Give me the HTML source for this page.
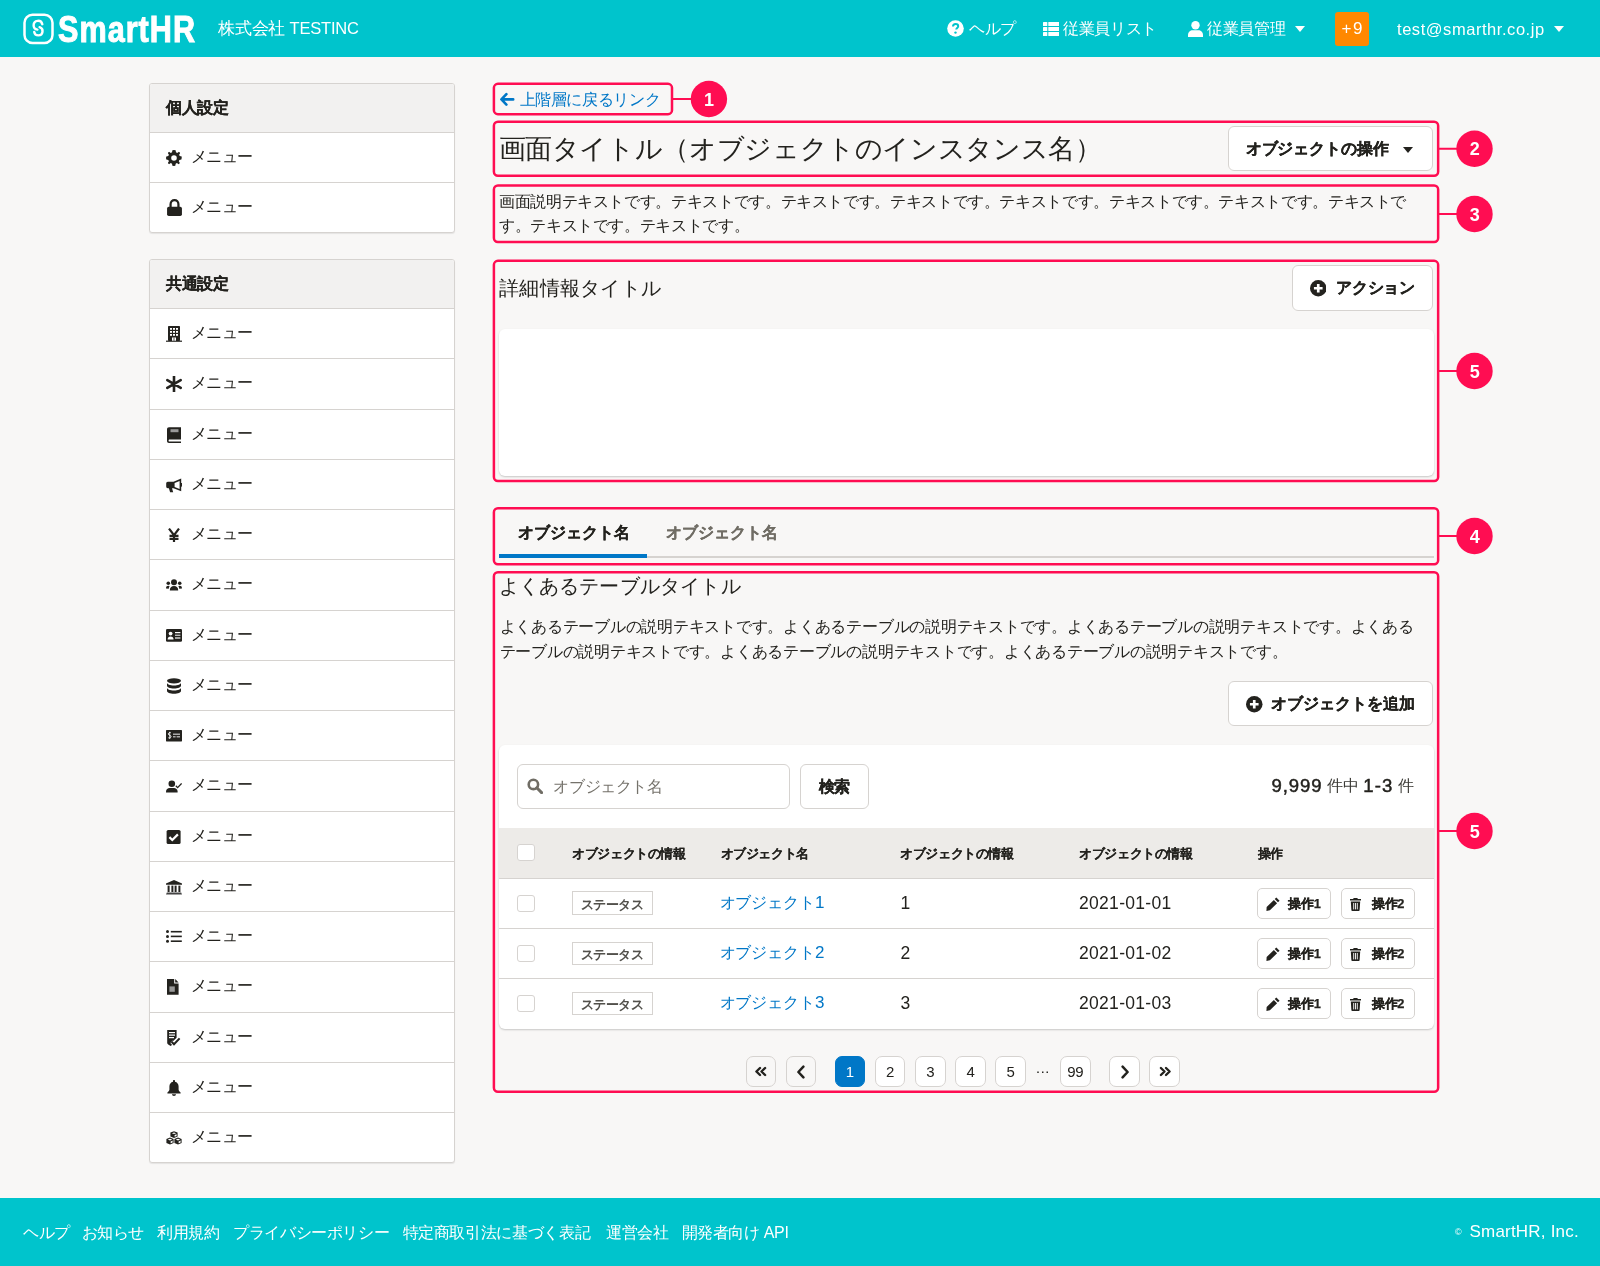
<!DOCTYPE html>
<html lang="ja"><head><meta charset="utf-8"><title>SmartHR</title>
<style>
*{box-sizing:border-box;margin:0;padding:0}
html,body{width:1600px;height:1266px;overflow:hidden}
html{background:#f8f7f6}body{position:relative;font-family:"Liberation Sans",sans-serif;color:#23221e;font-size:16px;letter-spacing:-0.36px;line-height:1}
.a{position:absolute}
.t{position:absolute;white-space:nowrap;line-height:1}
#hdr{left:0;top:0;width:1600px;height:57px;background:#00c4cc}
#ftr{left:0;top:1197.5px;width:1600px;height:69px;background:#00c4cc}
.w{color:#fff}
.side{position:absolute;left:149px;width:306px;background:#fff;border:1px solid #d6d3d0;border-radius:3px;box-shadow:0 1px 1px rgba(0,0,0,.08);overflow:hidden}
.side .hd{height:49px;background:#f2f1f0;border-bottom:1px solid #d6d3d0;position:relative}
.side .hd span{position:absolute;left:16px;top:16.2px;font-weight:bold;font-size:16px;letter-spacing:-0.36px}
.side .row{height:50.25px;border-bottom:1px solid #d6d3d0;position:relative}
.side .row:last-child{border-bottom:none}
.side .row svg{position:absolute;left:16px;top:17px;width:16px;height:16px}
.side .row span{position:absolute;left:40.5px;top:16px;font-size:16px;letter-spacing:-0.36px}
.btn{position:absolute;background:#fff;border:1px solid #d6d3d0;border-radius:6px}
.btn span{position:absolute;white-space:nowrap;font-weight:bold;-webkit-text-stroke:.25px #23221e}
[style*="font-weight:bold"]{-webkit-text-stroke:.2px currentColor}
.side .hd span{-webkit-text-stroke:.2px currentColor}
.panel{position:absolute;background:#fff;border-radius:6px;box-shadow:0 1px 2px rgba(0,0,0,.2)}
</style></head><body><div id="root" style="position:absolute;left:0;top:0;width:1600px;height:1266px;will-change:transform">
<!-- HEADER -->
<div id="hdr" class="a"></div>
<svg class="a" style="left:23px;top:13px" width="32" height="32" viewBox="0 0 32 32">
  <rect x="1.5" y="1.8" width="28" height="28.2" rx="8" fill="none" stroke="#fff" stroke-width="2.5"/>
  <path d="M19.3 11.2A4.4 4.4 0 1 0 14.4 16.6M16.6 14.2A4.2 4.2 0 1 1 11.2 18.9" fill="none" stroke="#fff" stroke-width="2.4" stroke-linecap="round"/>
</svg>
<div class="t w" style="left:58px;top:11.5px;font-size:36px;font-weight:bold;transform:scaleX(.85);transform-origin:0 0;letter-spacing:1.2px;-webkit-text-stroke:1px #fff">SmartHR</div>
<div class="t w" style="left:218px;top:20px;font-size:16.5px;letter-spacing:-0.2px">株式会社 TESTINC</div>

<!-- nav -->
<svg class="a" style="left:947px;top:20px" width="17" height="17" viewBox="0 0 17 17"><circle cx="8.5" cy="8.5" r="8.3" fill="#fff"/><path d="M6 6.6c0-1.6 1.2-2.5 2.6-2.5 1.5 0 2.6.9 2.6 2.2 0 1.7-2 1.8-2 3.3" fill="none" stroke="#00c4cc" stroke-width="2"/><circle cx="8.5" cy="12.6" r="1.2" fill="#00c4cc"/></svg>
<div class="t w" style="left:969px;top:21px;font-size:16px;letter-spacing:-0.36px">ヘルプ</div>
<svg class="a" style="left:1042.5px;top:21.8px" width="16.5" height="14" viewBox="0 0 16.5 14"><g fill="#fff"><rect x="0" y="0" width="4.3" height="4" rx=".6"/><rect x="5.3" y="0" width="11.2" height="4" rx=".6"/><rect x="0" y="5" width="4.3" height="4" rx=".6"/><rect x="5.3" y="5" width="11.2" height="4" rx=".6"/><rect x="0" y="10" width="4.3" height="4" rx=".6"/><rect x="5.3" y="10" width="11.2" height="4" rx=".6"/></g></svg>
<div class="t w" style="left:1063px;top:21px;font-size:16px;letter-spacing:-0.36px">従業員リスト</div>
<svg class="a" style="left:1187.5px;top:20.5px" width="15" height="16.5" viewBox="0 0 15 16.5"><g fill="#fff"><circle cx="7.5" cy="4.2" r="4.2"/><path d="M0 16.5 V14.2 C0 11.2 2.3 9.3 4.6 9.3 H10.4 C12.7 9.3 15 11.2 15 14.2 V16.5Z"/></g></svg>
<div class="t w" style="left:1207px;top:21px;font-size:16px;letter-spacing:-0.36px">従業員管理</div>
<svg class="a" style="left:1295px;top:26px" width="10" height="6" viewBox="0 0 10 6"><path d="M0 0H10L5 6Z" fill="#fff"/></svg>
<div class="a" style="left:1335.4px;top:12px;width:34px;height:33.6px;background:#ff8800;border-radius:3px"></div>
<div class="t w" style="left:1341.5px;top:20px;font-size:17px;letter-spacing:1.5px">+9</div>
<div class="t w" style="left:1397px;top:20.5px;font-size:16.5px;letter-spacing:0.55px">test@smarthr.co.jp</div>
<svg class="a" style="left:1553.5px;top:26px" width="10" height="6" viewBox="0 0 10 6"><path d="M0 0H10L5 6Z" fill="#fff"/></svg>

<!-- SIDEBAR -->
<div class="side" style="top:82.7px;height:150px">
  <div class="hd"><span>個人設定</span></div>
  <div class="row"><svg viewBox="0 0 16 16"><path fill="#23221e" d="M8 0l1.6 .3.4 2 1.2.6 1.8-1.1 1.2 1.2-1.1 1.8.6 1.2 2 .4V8l-.3 1.6-2 .4-.6 1.2 1.1 1.8-1.2 1.2-1.8-1.1-1.2.6-.4 2L8 16l-1.6-.3-.4-2-1.2-.6-1.8 1.1-1.2-1.2 1.1-1.8-.6-1.2-2-.4L0 8l.3-1.6 2-.4.6-1.2L1.8 3 3 1.8l1.8 1.1 1.2-.6.4-2zM8 5.2a2.8 2.8 0 100 5.6 2.8 2.8 0 000-5.6z"/></svg><span>メニュー</span></div>
  <div class="row"><svg style="top:15.6px;width:17px;height:17px" viewBox="0 0 16 16"><path fill="none" stroke="#23221e" stroke-width="2.1" d="M4.3 8V5C4.3 2.7 5.9 1.1 8 1.1S11.7 2.7 11.7 5V8"/><rect x="1" y="7.4" width="14" height="8.6" rx="1.6" fill="#23221e"/></svg><span>メニュー</span></div>
</div>

<div class="side" style="top:259px;height:903.5px" id="side2">
  <div class="hd"><span>共通設定</span></div>
  <div class="row"><svg style="top:16.7px" viewBox="0 0 16 16" fill="#23221e"><rect x="2" y="0" width="12" height="15" rx=".8"/><rect x="0" y="14.6" width="16" height="1.2"/><g fill="#fff"><rect x="4" y="2" width="2" height="1.8"/><rect x="7" y="2" width="2" height="1.8"/><rect x="10" y="2" width="2" height="1.8"/><rect x="4" y="5" width="2" height="1.8"/><rect x="7" y="5" width="2" height="1.8"/><rect x="10" y="5" width="2" height="1.8"/><rect x="4" y="8" width="2" height="1.8"/><rect x="7" y="8" width="2" height="1.8"/><rect x="10" y="8" width="2" height="1.8"/><rect x="6" y="11.5" width="4" height="3.2"/></g><rect x="7.6" y="11.5" width=".8" height="3.2"/></svg><span>メニュー</span></div>
  <div class="row"><svg style="top:16.7px" viewBox="0 0 16 16" fill="#23221e"><path d="M8 0.2V15.8M1.3 4.1L14.7 11.9M1.3 11.9L14.7 4.1" stroke="#23221e" stroke-width="2.6" stroke-linecap="round"/></svg><span>メニュー</span></div>
  <div class="row"><svg style="top:17.1px" viewBox="0 0 16 16" fill="#23221e"><path d="M3 0.2H15V12.6H3.6C2.9 12.6 2.6 13.1 2.6 13.7C2.6 14.3 2.9 14.6 3.6 14.6H15V16H3C1.8 16 1 15.2 1 14V2.2C1 1 1.8 .2 3 .2Z"/><rect x="4.5" y="2.2" width="8" height="3" fill="#999"/></svg><span>メニュー</span></div>
  <div class="row"><svg style="top:18.1px" viewBox="0 0 16 16" fill="#23221e"><path d="M15.2 .6V13.2L7.5 10.3H6L7.2 14.2H4.1L2.9 10.3H1.8C.9 10.3 .2 9.6 .2 8.6V5.4C.2 4.5 .9 3.7 1.8 3.7H7.5L15.2 .6ZM13.6 3L8.6 5V9.1L13.6 11Z"/><rect x="15" y="5" width="1" height="3.6"/></svg><span>メニュー</span></div>
  <div class="row"><svg style="top:17.7px" viewBox="0 0 16 16" fill="#23221e"><path d="M3 0.6L8 7.2L13 0.6M8 7V14M3.5 7.8H12.5M3.5 10.8H12.5" stroke="#23221e" stroke-width="2.2" fill="none"/></svg><span>メニュー</span></div>
  <div class="row"><svg style="top:19.2px" viewBox="0 0 16 16" fill="#23221e"><circle cx="8" cy="3.2" r="3"/><circle cx="2.3" cy="4.2" r="1.8"/><circle cx="13.7" cy="4.2" r="1.8"/><path d="M3.8 11.6C3.8 8.6 5.2 7 8 7C10.8 7 12.2 8.6 12.2 11.6Z"/><path d="M0 9.5C0 7.5 .9 6.8 2.3 6.8C3 6.8 3.4 7 3.6 7.3C3 8 2.8 8.8 2.8 9.7Z"/><path d="M16 9.5C16 7.5 15.1 6.8 13.7 6.8C13 6.8 12.6 7 12.4 7.3C13 8 13.2 8.8 13.2 9.7Z"/></svg><span>メニュー</span></div>
  <div class="row"><svg style="top:18.8px" viewBox="0 0 16 16" fill="#23221e"><rect x="0" y="0" width="16" height="12.8" rx="1.3"/><g fill="#fff"><circle cx="4.6" cy="4.6" r="1.9"/><path d="M1.6 10.4C1.6 8.4 2.8 7.4 4.6 7.4C6.4 7.4 7.6 8.4 7.6 10.4Z"/><rect x="9" y="3" width="5.4" height="1.2"/><rect x="9" y="5.6" width="5.4" height="1.4" fill="#bbb"/><rect x="9" y="8.4" width="5.4" height="1.2"/></g></svg><span>メニュー</span></div>
  <div class="row"><svg style="top:17.6px" viewBox="0 0 16 16" fill="#23221e"><ellipse cx="8" cy="2.8" rx="7" ry="2.6"/><path d="M1 4.8C1 6.4 4 7.6 8 7.6S15 6.4 15 4.8V7.8C15 9.4 12 10.6 8 10.6S1 9.4 1 7.8Z"/><path d="M1 9.8C1 11.4 4 12.6 8 12.6S15 11.4 15 9.8V13.1C15 14.7 12 15.8 8 15.8S1 14.7 1 13.1Z"/></svg><span>メニュー</span></div>
  <div class="row"><svg style="top:19.2px" viewBox="0 0 16 16" fill="#23221e"><rect x="0" y="0" width="16" height="11.4" rx=".6"/><g fill="#fff"><path d="M4.6 2.6C3.2 2.4 2.4 3 2.4 3.9C2.4 5.6 5 5 5 6.6C5 7.5 4 8.2 2.4 7.8" stroke="#fff" stroke-width="1" fill="none"/><rect x="3.4" y="1.8" width=".8" height="7.2"/><rect x="7" y="3.6" width="7" height="1.2" fill="#ccc"/><rect x="7" y="6.2" width="2.6" height="1.2" fill="#ccc"/><rect x="10.6" y="6.2" width="3.4" height="1.2" fill="#ccc"/></g></svg><span>メニュー</span></div>
  <div class="row"><svg style="top:18.5px" viewBox="0 0 16 16" fill="#23221e"><circle cx="5.8" cy="3.8" r="3.3"/><path d="M0 12.4V11.4C0 9.2 1.8 7.9 3.6 7.9H8C9.8 7.9 11.6 9.2 11.6 11.4V12.4Z"/><path d="M9.8 5.8L11.6 7.6L15.6 3.4" stroke="#23221e" stroke-width="1.3" fill="none"/></svg><span>メニュー</span></div>
  <div class="row"><svg style="top:18.3px" viewBox="0 0 16 16" fill="#23221e"><rect x=".6" y="0" width="14" height="14" rx="1.6"/><path d="M3.4 7.1L6.3 10L11.9 4.4" stroke="#fff" stroke-width="2.2" fill="none"/></svg><span>メニュー</span></div>
  <div class="row"><svg style="top:18.5px" viewBox="0 0 16 16" fill="#23221e"><path d="M8 0L16 3.6V4.8H0V3.6Z"/><rect x="1.6" y="5.6" width="2" height="6.4"/><rect x="5.4" y="5.6" width="2" height="6.4"/><rect x="8.6" y="5.6" width="2" height="6.4"/><rect x="12.4" y="5.6" width="2" height="6.4"/><path d="M.8 12.6H15.2L16 14.4H0Z" fill="#444"/></svg><span>メニュー</span></div>
  <div class="row"><svg style="top:18.3px" viewBox="0 0 16 16" fill="#23221e"><circle cx="1.5" cy="1.6" r="1.5"/><circle cx="1.5" cy="6.4" r="1.5"/><circle cx="1.5" cy="11.2" r="1.5"/><rect x="4.8" y=".9" width="11" height="1.6"/><rect x="4.8" y="5.6" width="11" height="1.6"/><rect x="4.8" y="10.4" width="11" height="1.6"/></svg><span>メニュー</span></div>
  <div class="row"><svg style="top:17.1px" viewBox="0 0 16 16" fill="#23221e"><path d="M1 0H8.2V4.4H12.6V15.8H1Z"/><path d="M9.2 0L12.6 3.4H9.2Z"/><rect x="3.4" y="7.4" width="5.4" height="5.4" fill="#999"/></svg><span>メニュー</span></div>
  <div class="row"><svg style="top:17.4px" viewBox="0 0 16 16" fill="#23221e"><path d="M1.2 0H10.6V7.8L7 11.2V14.2L4.6 16L2.2 14.4C1.6 14 1.2 13.6 1.2 13Z"/><g fill="#fff"><rect x="3" y="2" width="6" height="1.2"/><rect x="3" y="4.5" width="6" height="1.2"/><rect x="3" y="7" width="5" height="1.2"/></g><path d="M5.6 11.8L8 14.3L13.6 8.4" stroke="#fff" stroke-width="3.6" fill="none"/><path d="M5.6 11.8L8 14.3L13.6 8.4" stroke="#23221e" stroke-width="2" fill="none"/></svg><span>メニュー</span></div>
  <div class="row"><svg style="top:17.7px" viewBox="0 0 16 16" fill="#23221e"><path d="M8 0C8.6 0 9 .4 9 1V1.8C11.2 2.3 12.6 4.2 12.6 6.6V9.4C12.6 10.4 13.4 11.4 14.6 12.6V13.6H1.4V12.6C2.6 11.4 3.4 10.4 3.4 9.4V6.6C3.4 4.2 4.8 2.3 7 1.8V1C7 .4 7.4 0 8 0Z"/><path d="M6 14.3H10C10 15.3 9.1 16 8 16S6 15.3 6 14.3Z"/></svg><span>メニュー</span></div>
  <div class="row"><svg style="top:18.3px" viewBox="0 0 16 16" fill="#23221e"><path d="M8 .2L11.6 1.5V5.6L8 7L4.4 5.6V1.5Z"/><path d="M4 6.6L7.6 7.9V12L4 13.4L.4 12V7.9Z"/><path d="M12 6.6L15.6 7.9V12L12 13.4L8.4 12V7.9Z"/><g fill="#fff"><path d="M8 1.4L10.2 2.2L8 3L5.8 2.2Z"/><path d="M8.6 4L10.6 3.2V5L8.6 5.8Z"/><path d="M4 7.8L6.2 8.6L4 9.4L1.8 8.6Z"/><path d="M4.6 10.4L6.6 9.6V11.4L4.6 12.2Z"/><path d="M12 7.8L14.2 8.6L12 9.4L9.8 8.6Z"/><path d="M12.6 10.4L14.6 9.6V11.4L12.6 12.2Z"/></g></svg><span>メニュー</span></div>
</div>

<!-- MAIN -->
<svg class="a" style="left:498.5px;top:92px" width="16" height="15" viewBox="0 0 16 15"><path d="M7.4 2.2L2.4 7.4L7.4 12.6M2.6 7.4H14.2" fill="none" stroke="#0077c7" stroke-width="2.6" stroke-linecap="round" stroke-linejoin="round"/></svg>
<div class="t" style="left:519.5px;top:92px;font-size:16px;letter-spacing:-0.36px;color:#0077c7">上階層に戻るリンク</div>

<div class="t" style="left:498.5px;top:135.5px;font-size:27px;letter-spacing:-0.36px">画面タイトル（オブジェクトのインスタンス名）</div>
<div class="btn" style="left:1228.2px;top:126.3px;width:204.5px;height:45.2px"><span style="left:16.5px;top:13.5px;font-size:16px;letter-spacing:-0.14px">オブジェクトの操作</span>
<svg class="a" style="left:174px;top:19.5px" width="10" height="6" viewBox="0 0 10 6"><path d="M0 0H10L5 6Z" fill="#23221e"/></svg></div>

<div class="a" style="left:499px;top:189.5px;font-size:16px;letter-spacing:-0.36px;line-height:24.5px;white-space:nowrap">画面説明テキストです。テキストです。テキストです。テキストです。テキストです。テキストです。テキストです。テキストで<br>す。テキストです。テキストです。</div>

<div class="t" style="left:499px;top:278px;font-size:20px;letter-spacing:.25px">詳細情報タイトル</div>
<div class="btn" style="left:1291.9px;top:265.3px;width:141px;height:45.4px">
<svg class="a" style="left:17px;top:14px" width="16.5" height="16.5" viewBox="0 0 16 16"><circle cx="8" cy="8" r="8" fill="#23221e"/><path d="M8 3.8v8.4M3.8 8h8.4" stroke="#fff" stroke-width="2.6"/></svg>
<span style="left:43.5px;top:13.5px;font-size:16px;letter-spacing:-0.36px">アクション</span></div>
<div class="panel" style="left:498.5px;top:329px;width:935px;height:147px"></div>

<!-- tabs -->
<div class="a" style="left:499px;top:556px;width:934.5px;height:1.5px;background:#d6d3d0"></div>
<div class="a" style="left:499px;top:554px;width:148px;height:4px;background:#0077c7"></div>
<div class="t" style="left:517.5px;top:525px;font-size:16px;letter-spacing:0px;font-weight:bold">オブジェクト名</div>
<div class="t" style="left:666px;top:525px;font-size:16px;letter-spacing:0px;font-weight:bold;color:#706d65">オブジェクト名</div>

<!-- table section -->
<div class="t" style="left:498.5px;top:576px;font-size:20px;letter-spacing:.2px">よくあるテーブルタイトル</div>
<div class="a" style="left:499.5px;top:615px;font-size:16px;letter-spacing:-0.24px;line-height:24.5px;white-space:nowrap">よくあるテーブルの説明テキストです。よくあるテーブルの説明テキストです。よくあるテーブルの説明テキストです。よくある<br>テーブルの説明テキストです。よくあるテーブルの説明テキストです。よくあるテーブルの説明テキストです。</div>
<div class="btn" style="left:1228.2px;top:681px;width:204.5px;height:45.4px">
<svg class="a" style="left:17px;top:14px" width="16.5" height="16.5" viewBox="0 0 16 16"><circle cx="8" cy="8" r="8" fill="#23221e"/><path d="M8 3.8v8.4M3.8 8h8.4" stroke="#fff" stroke-width="2.6"/></svg>
<span style="left:42px;top:13.8px;font-size:16px;letter-spacing:0px">オブジェクトを追加</span></div>

<div class="panel" style="left:498.5px;top:745.3px;width:935px;height:283.7px;overflow:hidden" id="tbl">
<div class="a" style="left:18.8px;top:18.7px;width:273.2px;height:44.8px;border:1px solid #d6d3d0;border-radius:6px;background:#fff"><svg class="a" style="left:8.5px;top:13.5px" width="16" height="16" viewBox="0 0 16 16"><circle cx="6.4" cy="6.4" r="4.7" fill="none" stroke="#706d65" stroke-width="2.6"/><path d="M9.8 9.8L14.6 14.6" stroke="#706d65" stroke-width="3" stroke-linecap="round"/></svg><div class="t" style="left:35px;top:14px;font-size:16px;letter-spacing:-0.36px;color:#75726b">オブジェクト名</div></div>
<div class="btn" style="left:301.75px;top:18.6px;width:68.4px;height:44.8px"><span style="left:17.5px;top:14px;font-size:16px;letter-spacing:-0.36px">検索</span></div>
<div class="t" style="right:19.5px;top:32px;font-size:18.5px;text-align:right;-webkit-text-stroke:.5px #23221e"><span style="letter-spacing:.9px">9,999</span> <span style="-webkit-text-stroke:0;font-size:16px;letter-spacing:-0.36px;position:relative;top:-1px;color:#3a3934">件中</span> <span style="letter-spacing:1.2px">1-3</span> <span style="-webkit-text-stroke:0;font-size:16px;letter-spacing:-0.36px;position:relative;top:-1px;color:#3a3934">件</span></div>
<div class="a" style="left:0;top:82.7px;width:935px;height:50.6px;background:#edebe8;border-bottom:1px solid #d6d3d0"></div>
<div class="a" style="left:18.9px;top:98.7px;width:17.3px;height:17.4px;background:#fff;border:1px solid #d6d3d0;border-radius:3px"></div>
<div class="t" style="left:73.5px;top:102.7px;font-size:12.5px;font-weight:bold;-webkit-text-stroke:.05px currentColor">オブジェクトの情報</div>
<div class="t" style="left:222.0px;top:102.7px;font-size:12.5px;font-weight:bold;-webkit-text-stroke:.05px currentColor">オブジェクト名</div>
<div class="t" style="left:401.5px;top:102.7px;font-size:12.5px;font-weight:bold;-webkit-text-stroke:.05px currentColor">オブジェクトの情報</div>
<div class="t" style="left:580.5px;top:102.7px;font-size:12.5px;font-weight:bold;-webkit-text-stroke:.05px currentColor">オブジェクトの情報</div>
<div class="t" style="left:759.0px;top:102.7px;font-size:12.5px;font-weight:bold;-webkit-text-stroke:.05px currentColor">操作</div>
<div class="a" style="left:0;top:182.6px;width:935px;height:1px;background:#d6d3d0"></div>
<div class="a" style="left:18.9px;top:149.3px;width:17.3px;height:17.4px;background:#fff;border:1px solid #d6d3d0;border-radius:3px"></div>
<div class="a" style="left:73.5px;top:146.2px;width:80.6px;height:23.7px;border:1px solid #d6d3d0;background:#fff"><div class="t" style="left:7.5px;top:5.5px;font-size:13px;letter-spacing:-0.4px;font-weight:bold;color:#52504b;-webkit-text-stroke:0">ステータス</div></div>
<div class="t" style="left:221.0px;top:149.0px;font-size:16px;letter-spacing:-0.1px;color:#0077c7">オブジェクト<span style="font-size:17px">1</span></div>
<div class="t" style="left:402.0px;top:149.5px;font-size:17.5px">1</div>
<div class="t" style="left:580.5px;top:149.5px;font-size:17.5px;letter-spacing:.3px">2021-01-01</div>
<div class="btn" style="left:758.9px;top:143.0px;width:74px;height:30.5px;border-radius:5px"><svg class="a" style="left:7.6px;top:8px" width="14" height="14" viewBox="0 0 13 13"><path d="M9.6 .4L12.6 3.4L11.1 4.9L8.1 1.9ZM7.3 2.7L10.3 5.7L3.6 12.4L.4 12.9L.6 9.4Z" fill="#23221e"/></svg><span style="left:30px;top:8.5px;font-size:12.8px">操作1</span></div>
<div class="btn" style="left:842.5px;top:143.0px;width:74px;height:30.5px;border-radius:5px"><svg class="a" style="left:8.3px;top:8.5px" width="11" height="13" viewBox="0 0 11 13"><path d="M3.6 0H7.4L7.8 1H11V2.6H0V1H3.2ZM.8 3.4H10.2L9.6 12.2C9.6 12.7 9.2 13 8.7 13H2.3C1.8 13 1.4 12.7 1.4 12.2Z" fill="#23221e"/><path d="M3.7 5V11.4M5.5 5V11.4M7.3 5V11.4" stroke="#fff" stroke-width=".9"/></svg><span style="left:30px;top:8.5px;font-size:12.8px">操作2</span></div>
<div class="a" style="left:0;top:232.7px;width:935px;height:1px;background:#d6d3d0"></div>
<div class="a" style="left:18.9px;top:199.4px;width:17.3px;height:17.4px;background:#fff;border:1px solid #d6d3d0;border-radius:3px"></div>
<div class="a" style="left:73.5px;top:196.3px;width:80.6px;height:23.7px;border:1px solid #d6d3d0;background:#fff"><div class="t" style="left:7.5px;top:5.5px;font-size:13px;letter-spacing:-0.4px;font-weight:bold;color:#52504b;-webkit-text-stroke:0">ステータス</div></div>
<div class="t" style="left:221.0px;top:199.1px;font-size:16px;letter-spacing:-0.1px;color:#0077c7">オブジェクト<span style="font-size:17px">2</span></div>
<div class="t" style="left:402.0px;top:199.6px;font-size:17.5px">2</div>
<div class="t" style="left:580.5px;top:199.6px;font-size:17.5px;letter-spacing:.3px">2021-01-02</div>
<div class="btn" style="left:758.9px;top:193.1px;width:74px;height:30.5px;border-radius:5px"><svg class="a" style="left:7.6px;top:8px" width="14" height="14" viewBox="0 0 13 13"><path d="M9.6 .4L12.6 3.4L11.1 4.9L8.1 1.9ZM7.3 2.7L10.3 5.7L3.6 12.4L.4 12.9L.6 9.4Z" fill="#23221e"/></svg><span style="left:30px;top:8.5px;font-size:12.8px">操作1</span></div>
<div class="btn" style="left:842.5px;top:193.1px;width:74px;height:30.5px;border-radius:5px"><svg class="a" style="left:8.3px;top:8.5px" width="11" height="13" viewBox="0 0 11 13"><path d="M3.6 0H7.4L7.8 1H11V2.6H0V1H3.2ZM.8 3.4H10.2L9.6 12.2C9.6 12.7 9.2 13 8.7 13H2.3C1.8 13 1.4 12.7 1.4 12.2Z" fill="#23221e"/><path d="M3.7 5V11.4M5.5 5V11.4M7.3 5V11.4" stroke="#fff" stroke-width=".9"/></svg><span style="left:30px;top:8.5px;font-size:12.8px">操作2</span></div>
<div class="a" style="left:18.9px;top:249.5px;width:17.3px;height:17.4px;background:#fff;border:1px solid #d6d3d0;border-radius:3px"></div>
<div class="a" style="left:73.5px;top:246.4px;width:80.6px;height:23.7px;border:1px solid #d6d3d0;background:#fff"><div class="t" style="left:7.5px;top:5.5px;font-size:13px;letter-spacing:-0.4px;font-weight:bold;color:#52504b;-webkit-text-stroke:0">ステータス</div></div>
<div class="t" style="left:221.0px;top:249.2px;font-size:16px;letter-spacing:-0.1px;color:#0077c7">オブジェクト<span style="font-size:17px">3</span></div>
<div class="t" style="left:402.0px;top:249.7px;font-size:17.5px">3</div>
<div class="t" style="left:580.5px;top:249.7px;font-size:17.5px;letter-spacing:.3px">2021-01-03</div>
<div class="btn" style="left:758.9px;top:243.2px;width:74px;height:30.5px;border-radius:5px"><svg class="a" style="left:7.6px;top:8px" width="14" height="14" viewBox="0 0 13 13"><path d="M9.6 .4L12.6 3.4L11.1 4.9L8.1 1.9ZM7.3 2.7L10.3 5.7L3.6 12.4L.4 12.9L.6 9.4Z" fill="#23221e"/></svg><span style="left:30px;top:8.5px;font-size:12.8px">操作1</span></div>
<div class="btn" style="left:842.5px;top:243.2px;width:74px;height:30.5px;border-radius:5px"><svg class="a" style="left:8.3px;top:8.5px" width="11" height="13" viewBox="0 0 11 13"><path d="M3.6 0H7.4L7.8 1H11V2.6H0V1H3.2ZM.8 3.4H10.2L9.6 12.2C9.6 12.7 9.2 13 8.7 13H2.3C1.8 13 1.4 12.7 1.4 12.2Z" fill="#23221e"/><path d="M3.7 5V11.4M5.5 5V11.4M7.3 5V11.4" stroke="#fff" stroke-width=".9"/></svg><span style="left:30px;top:8.5px;font-size:12.8px">操作2</span></div>
</div>

<!-- pagination -->
<div class="a" style="left:745.5px;top:1056.3px;width:30.5px;height:30.4px;background:#f8f7f6;border:1px solid #d6d3d0;border-radius:7px"><svg class="a" style="left:7.5px;top:9px" width="14" height="11" viewBox="0 0 14 11"><path d="M6 2L2.4 5.5L6 9M11.1 2L7.5 5.5L11.1 9" fill="none" stroke="#23221e" stroke-width="2.4" stroke-linecap="round" stroke-linejoin="round"/></svg></div>
<div class="a" style="left:785.7px;top:1056.3px;width:30.5px;height:30.4px;background:#f8f7f6;border:1px solid #d6d3d0;border-radius:7px"><svg class="a" style="left:9.5px;top:7.5px" width="10" height="14" viewBox="0 0 10 14"><path d="M7.4 1.6L2.4 7L7.4 12.4" fill="none" stroke="#23221e" stroke-width="2.5" stroke-linecap="round" stroke-linejoin="round"/></svg></div>
<div class="a" style="left:834.6px;top:1056.3px;width:30.5px;height:30.4px;background:#0077c7;border:1px solid #0077c7;border-radius:7px"><div class="t" style="left:0;width:28.5px;text-align:center;top:7px;font-size:15px;color:#fff">1</div></div>
<div class="a" style="left:874.8px;top:1056.3px;width:30.5px;height:30.4px;background:#fff;border:1px solid #d6d3d0;border-radius:7px"><div class="t" style="left:0;width:28.5px;text-align:center;top:7px;font-size:15px">2</div></div>
<div class="a" style="left:915px;top:1056.3px;width:30.5px;height:30.4px;background:#fff;border:1px solid #d6d3d0;border-radius:7px"><div class="t" style="left:0;width:28.5px;text-align:center;top:7px;font-size:15px">3</div></div>
<div class="a" style="left:955.2px;top:1056.3px;width:30.5px;height:30.4px;background:#fff;border:1px solid #d6d3d0;border-radius:7px"><div class="t" style="left:0;width:28.5px;text-align:center;top:7px;font-size:15px">4</div></div>
<div class="a" style="left:995.2px;top:1056.3px;width:30.5px;height:30.4px;background:#fff;border:1px solid #d6d3d0;border-radius:7px"><div class="t" style="left:0;width:28.5px;text-align:center;top:7px;font-size:15px">5</div></div>
<div class="a" style="left:1060px;top:1056.3px;width:30.5px;height:30.4px;background:#fff;border:1px solid #d6d3d0;border-radius:7px"><div class="t" style="left:0;width:28.5px;text-align:center;top:7px;font-size:15px">99</div></div>
<div class="t" style="left:1035.5px;top:1063px;font-size:15px">···</div>
<div class="a" style="left:1109px;top:1056.3px;width:30.5px;height:30.4px;background:#fff;border:1px solid #d6d3d0;border-radius:7px"><svg class="a" style="left:10px;top:7.5px" width="10" height="14" viewBox="0 0 10 14"><path d="M2.6 1.6L7.6 7L2.6 12.4" fill="none" stroke="#23221e" stroke-width="2.5" stroke-linecap="round" stroke-linejoin="round"/></svg></div>
<div class="a" style="left:1149px;top:1056.3px;width:30.5px;height:30.4px;background:#fff;border:1px solid #d6d3d0;border-radius:7px"><svg class="a" style="left:8px;top:9px" width="14" height="11" viewBox="0 0 14 11"><path d="M2.9 2L6.5 5.5L2.9 9M8 2L11.6 5.5L8 9" fill="none" stroke="#23221e" stroke-width="2.4" stroke-linecap="round" stroke-linejoin="round"/></svg></div>

<!-- FOOTER -->
<div id="ftr" class="a"></div>
<div class="t w" style="left:23px;top:1225px;font-size:16px;letter-spacing:-0.36px">ヘルプ</div>
<div class="t w" style="left:81.5px;top:1225px;font-size:16px;letter-spacing:-0.36px">お知らせ</div>
<div class="t w" style="left:157px;top:1225px;font-size:16px;letter-spacing:-0.36px">利用規約</div>
<div class="t w" style="left:233px;top:1225px;font-size:16px;letter-spacing:-0.36px">プライバシーポリシー</div>
<div class="t w" style="left:402.5px;top:1225px;font-size:16px;letter-spacing:-0.36px">特定商取引法に基づく表記</div>
<div class="t w" style="left:606px;top:1225px;font-size:16px;letter-spacing:-0.36px">運営会社</div>
<div class="t w" style="left:681.5px;top:1225px;font-size:16px;letter-spacing:-0.36px">開発者向け API</div>
<div class="t w" style="left:1455px;top:1228px;font-size:9px">©</div>
<div class="t w" style="left:1469.5px;top:1223px;font-size:17px;letter-spacing:.2px">SmartHR, Inc.</div>

<!-- ANNOTATIONS -->
<svg class="a" style="left:0;top:0" width="1600" height="1266" viewBox="0 0 1600 1266">
<g fill="none" stroke="#ff0d52" stroke-width="2.5">
<rect x="493.9" y="83.85" width="178.1" height="30.3" rx="4"/>
<rect x="493.9" y="121.75" width="944.25" height="54" rx="4"/>
<rect x="493.9" y="185.55" width="944.25" height="56.4" rx="4"/>
<rect x="493.9" y="260.85" width="944.25" height="220.2" rx="4"/>
<rect x="493.9" y="508.15" width="944.25" height="56.2" rx="4"/>
<rect x="493.9" y="572.25" width="944.25" height="519.6" rx="4"/>
<path d="M673 99H700M1439 148.8H1465M1439 214H1465M1439 371H1465M1439 536H1465M1439 831H1465" stroke-width="2"/>
</g>
<g fill="#ff0d52"><circle cx="708.9" cy="99" r="18.2"/><circle cx="1474.5" cy="148.8" r="18.2"/><circle cx="1474.5" cy="214" r="18.2"/><circle cx="1474.5" cy="371" r="18.2"/><circle cx="1474.5" cy="536" r="18.2"/><circle cx="1474.5" cy="831" r="18.2"/></g>
<g fill="#fff" font-family="Liberation Sans" font-weight="bold" font-size="18" text-anchor="middle">
<text x="708.9" y="105.5">1</text><text x="1474.5" y="155.3">2</text><text x="1474.5" y="220.5">3</text><text x="1474.5" y="377.5">5</text><text x="1474.5" y="542.5">4</text><text x="1474.5" y="837.5">5</text>
</g>
</svg>
</div></body></html>
